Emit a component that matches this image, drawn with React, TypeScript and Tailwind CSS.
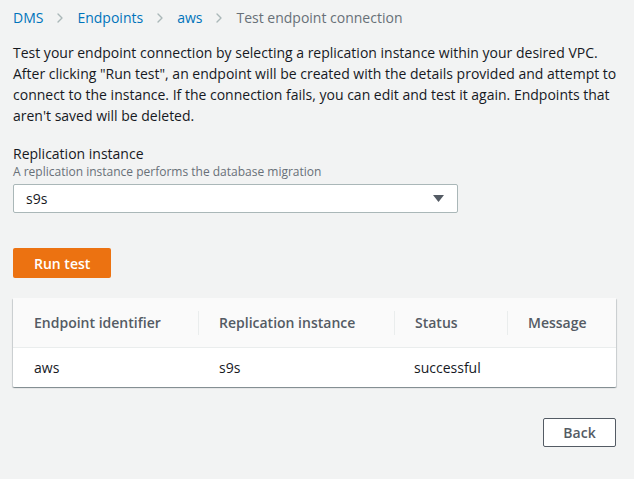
import { ChevronRight } from "lucide-react";

const crumbs = ["DMS", "Endpoints", "aws"];

const columns = ["Endpoint identifier", "Replication instance", "Status", "Message"];

const rows = [{ id: "aws", instance: "s9s", status: "successful", message: "" }];

export default function App() {
  return (
    <main className="min-h-screen bg-[#f2f3f3] px-[13px] pt-[8px] text-[14px] text-[#16191f] font-['Open_Sans',Arial,sans-serif]">
      <nav className="flex h-[20px] items-center leading-[20px]">
        {crumbs.map((c) => (
          <span key={c} className="flex items-center">
            <a className="text-[#0073bb]">{c}</a>
            <ChevronRight className="mx-[9px] h-[16px] w-[16px] text-[#aab7b8]" strokeWidth={2} />
          </span>
        ))}
        <span className="text-[#687078]">Test endpoint connection</span>
      </nav>

      <p className="mt-[14px] leading-[21px]">
        Test your endpoint connection by selecting a replication instance within your desired VPC. After clicking
        "Run test", an endpoint will be created with the details provided and attempt to connect to the instance. If
        the connection fails, you can edit and test it again. Endpoints that aren't saved will be deleted.
      </p>

      <div className="mt-[18px]">
        <p className="leading-[20px]">Replication instance</p>
        <p className="text-[12px] leading-[16px] text-[#687078]">A replication instance performs the database migration</p>
        <div className="mt-[4px] flex h-[29px] w-[445px] items-center justify-between rounded-[2px] border border-[#aab7b8] bg-white pl-[12px] pr-[13px]">
          <span>s9s</span>
          <svg width="11" height="7" viewBox="0 0 11 7" className="text-[#545b64]">
            <path d="M0 0h11L5.5 7z" fill="currentColor" />
          </svg>
        </div>
      </div>

      <button className="mt-[35px] flex h-[30px] items-center rounded-[2px] bg-[#ec7211] px-[21px] font-semibold text-white">
        Run test
      </button>

      <div className="mt-[20px] w-[603px] rounded-[1px] bg-white shadow-[0_1px_1px_0_rgba(0,28,36,0.3),1px_1px_1px_0_rgba(0,28,36,0.15),-1px_1px_1px_0_rgba(0,28,36,0.15)]">
        <div className="grid h-[50px] grid-cols-[185px_196px_113px_1fr] items-center border-b border-[#eaeded] bg-[#fafafa] font-semibold text-[#545b64]">
          {columns.map((col, i) => (
            <div key={col} className={`flex h-[24px] items-center pl-[20px] ${i > 0 ? "border-l border-[#eaeded]" : "pl-[21px]"}`}>
              {col}
            </div>
          ))}
        </div>
        {rows.map((r) => (
          <div key={r.id} className="grid h-[39px] grid-cols-[185px_196px_113px_1fr] items-center">
            <div className="pl-[21px]">{r.id}</div>
            <div className="pl-[21px]">{r.instance}</div>
            <div className="pl-[20px]">{r.status}</div>
            <div className="pl-[21px]">{r.message}</div>
          </div>
        ))}
      </div>

      <div className="mt-[31px] flex w-[603px] justify-end">
        <button className="h-[29px] w-[73px] rounded-[2px] border border-[#545b64] bg-white font-semibold text-[#545b64]">
          Back
        </button>
      </div>
    </main>
  );
}
